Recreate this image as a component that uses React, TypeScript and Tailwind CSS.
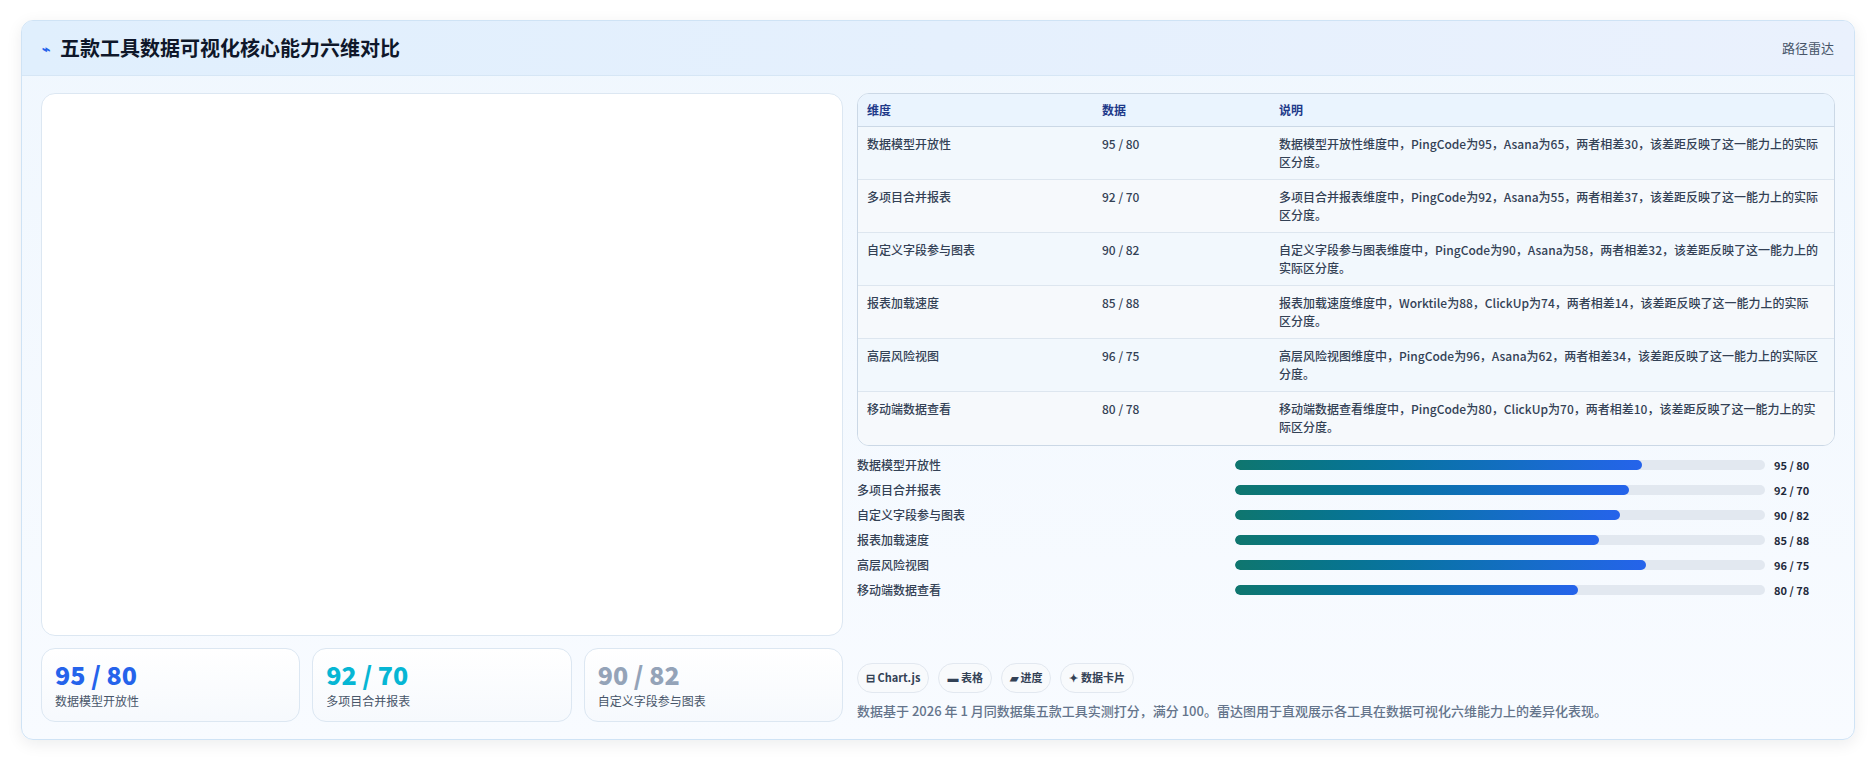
import React from "react";

const rows = [
  { d: "数据模型开放性", v: "95 / 80", a: 95, t: "数据模型开放性维度中，PingCode为95，Asana为65，两者相差30，该差距反映了这一能力上的实际区分度。" },
  { d: "多项目合并报表", v: "92 / 70", a: 92, t: "多项目合并报表维度中，PingCode为92，Asana为55，两者相差37，该差距反映了这一能力上的实际区分度。" },
  { d: "自定义字段参与图表", v: "90 / 82", a: 90, t: "自定义字段参与图表维度中，PingCode为90，Asana为58，两者相差32，该差距反映了这一能力上的实际区分度。" },
  { d: "报表加载速度", v: "85 / 88", a: 85, t: "报表加载速度维度中，Worktile为88，ClickUp为74，两者相差14，该差距反映了这一能力上的实际区分度。" },
  { d: "高层风险视图", v: "96 / 75", a: 96, t: "高层风险视图维度中，PingCode为96，Asana为62，两者相差34，该差距反映了这一能力上的实际区分度。" },
  { d: "移动端数据查看", v: "80 / 78", a: 80, t: "移动端数据查看维度中，PingCode为80，ClickUp为70，两者相差10，该差距反映了这一能力上的实际区分度。" },
];

export default function App() {
  return (
    <div className="w-[1876px] h-[760px] bg-white px-[21px] pt-[20px] text-[#334155]" style={{ fontFamily: '"Noto Sans CJK SC", "Noto Sans", sans-serif' }}>
      <div className="h-[720px] rounded-[12px] border border-[#cfe3f5] bg-gradient-to-b from-[#f0f7fe] to-[#f8fbff] shadow-[0_4px_16px_rgba(15,23,42,0.08)] overflow-hidden flex flex-col">
        <div className="h-[55px] shrink-0 flex items-center justify-between px-[20px] bg-gradient-to-r from-[#e0effd] to-[#eaf1fd] border-b border-[#d6e6f5]">
          <div className="flex items-center gap-[10px]">
            <span className="text-[#2563eb] text-[14px] font-bold">⌁</span>
            <span className="text-[20px] font-bold text-[#0f172a]">五款工具数据可视化核心能力六维对比</span>
          </div>
          <span className="text-[13px] text-[#475569]">路径雷达</span>
        </div>
        <div className="flex gap-[14px] px-[19px] pt-[17px] pb-[17px] flex-1">
          <div className="w-[802px] flex flex-col gap-[12px]">
            <div className="flex-1 bg-white rounded-[14px] border border-[#dce7f2]"></div>
            <div className="grid grid-cols-3 gap-[12px] h-[74px]">
              {[
                ["95 / 80", "数据模型开放性", "text-[#2563eb]"],
                ["92 / 70", "多项目合并报表", "text-[#06b6d4]"],
                ["90 / 82", "自定义字段参与图表", "text-[#94a3b8]"],
              ].map(([v, l, c]) => (
                <div key={l} className="rounded-[14px] border border-[#dce7f2] bg-gradient-to-b from-white to-[#f6f9fd] px-[13px] pt-[10px]">
                  <div className={`text-[25px] font-black leading-[30px] ${c}`}>{v}</div>
                  <div className="text-[12px] text-[#475569] mt-[3px]">{l}</div>
                </div>
              ))}
            </div>
          </div>
          <div className="flex-1 flex flex-col">
            <div className="rounded-[12px] border border-[#cbd8e6] overflow-hidden bg-[#f8fbfe]">
              <div className="grid grid-cols-[235px_177px_1fr] h-[33px] items-center bg-[#eaf4fe] border-b border-[#cbd8e6] text-[12px] font-bold text-[#1e3a8a] px-[9px]">
                <div>维度</div><div>数据</div><div>说明</div>
              </div>
              {rows.map((r, i) => (
                <div key={r.d} className={`grid grid-cols-[235px_177px_1fr] h-[53px] pt-[8px] px-[9px] text-[12px] font-medium text-[#334155] leading-[18px] ${i < 5 ? "border-b border-[#dde6ef]" : ""} ${i % 2 ? "bg-[#f6f9fc]" : "bg-[#f2f8fd]"}`}>
                  <div>{r.d}</div><div>{r.v}</div><div className="pr-[6px]">{r.t}</div>
                </div>
              ))}
            </div>
            <div className="flex flex-col gap-[7px] mt-[10px]">
              {rows.map((r) => (
                <div key={r.d} className="flex items-center h-[18px] text-[12px] font-medium">
                  <div className="w-[378px]">{r.d}</div>
                  <div className="w-[530px] h-[10px] rounded-full bg-[#e2e8f0] overflow-hidden">
                    <div className="h-full rounded-full bg-gradient-to-r from-[#0f766e] to-[#2563eb]" style={{ width: `${r.a * 0.808}%` }}></div>
                  </div>
                  <div className="ml-[9px] text-[11px] font-bold text-[#1e293b]">{r.v}</div>
                </div>
              ))}
            </div>
            <div className="mt-auto flex gap-[9px]">
              {["⊟ Chart.js", "▬ 表格", "▰ 进度", "✦ 数据卡片"].map((b) => (
                <span key={b} className="h-[30px] px-[8px] flex items-center rounded-full border border-[#e2e8f0] bg-[#f8fafc] text-[11px] font-bold text-[#334155]">{b}</span>
              ))}
            </div>
            <div className="mt-[8px] text-[13px] font-medium text-[#64748b] mb-[2px]">数据基于 2026 年 1 月同数据集五款工具实测打分，满分 100。雷达图用于直观展示各工具在数据可视化六维能力上的差异化表现。</div>
          </div>
        </div>
      </div>
    </div>
  );
}
